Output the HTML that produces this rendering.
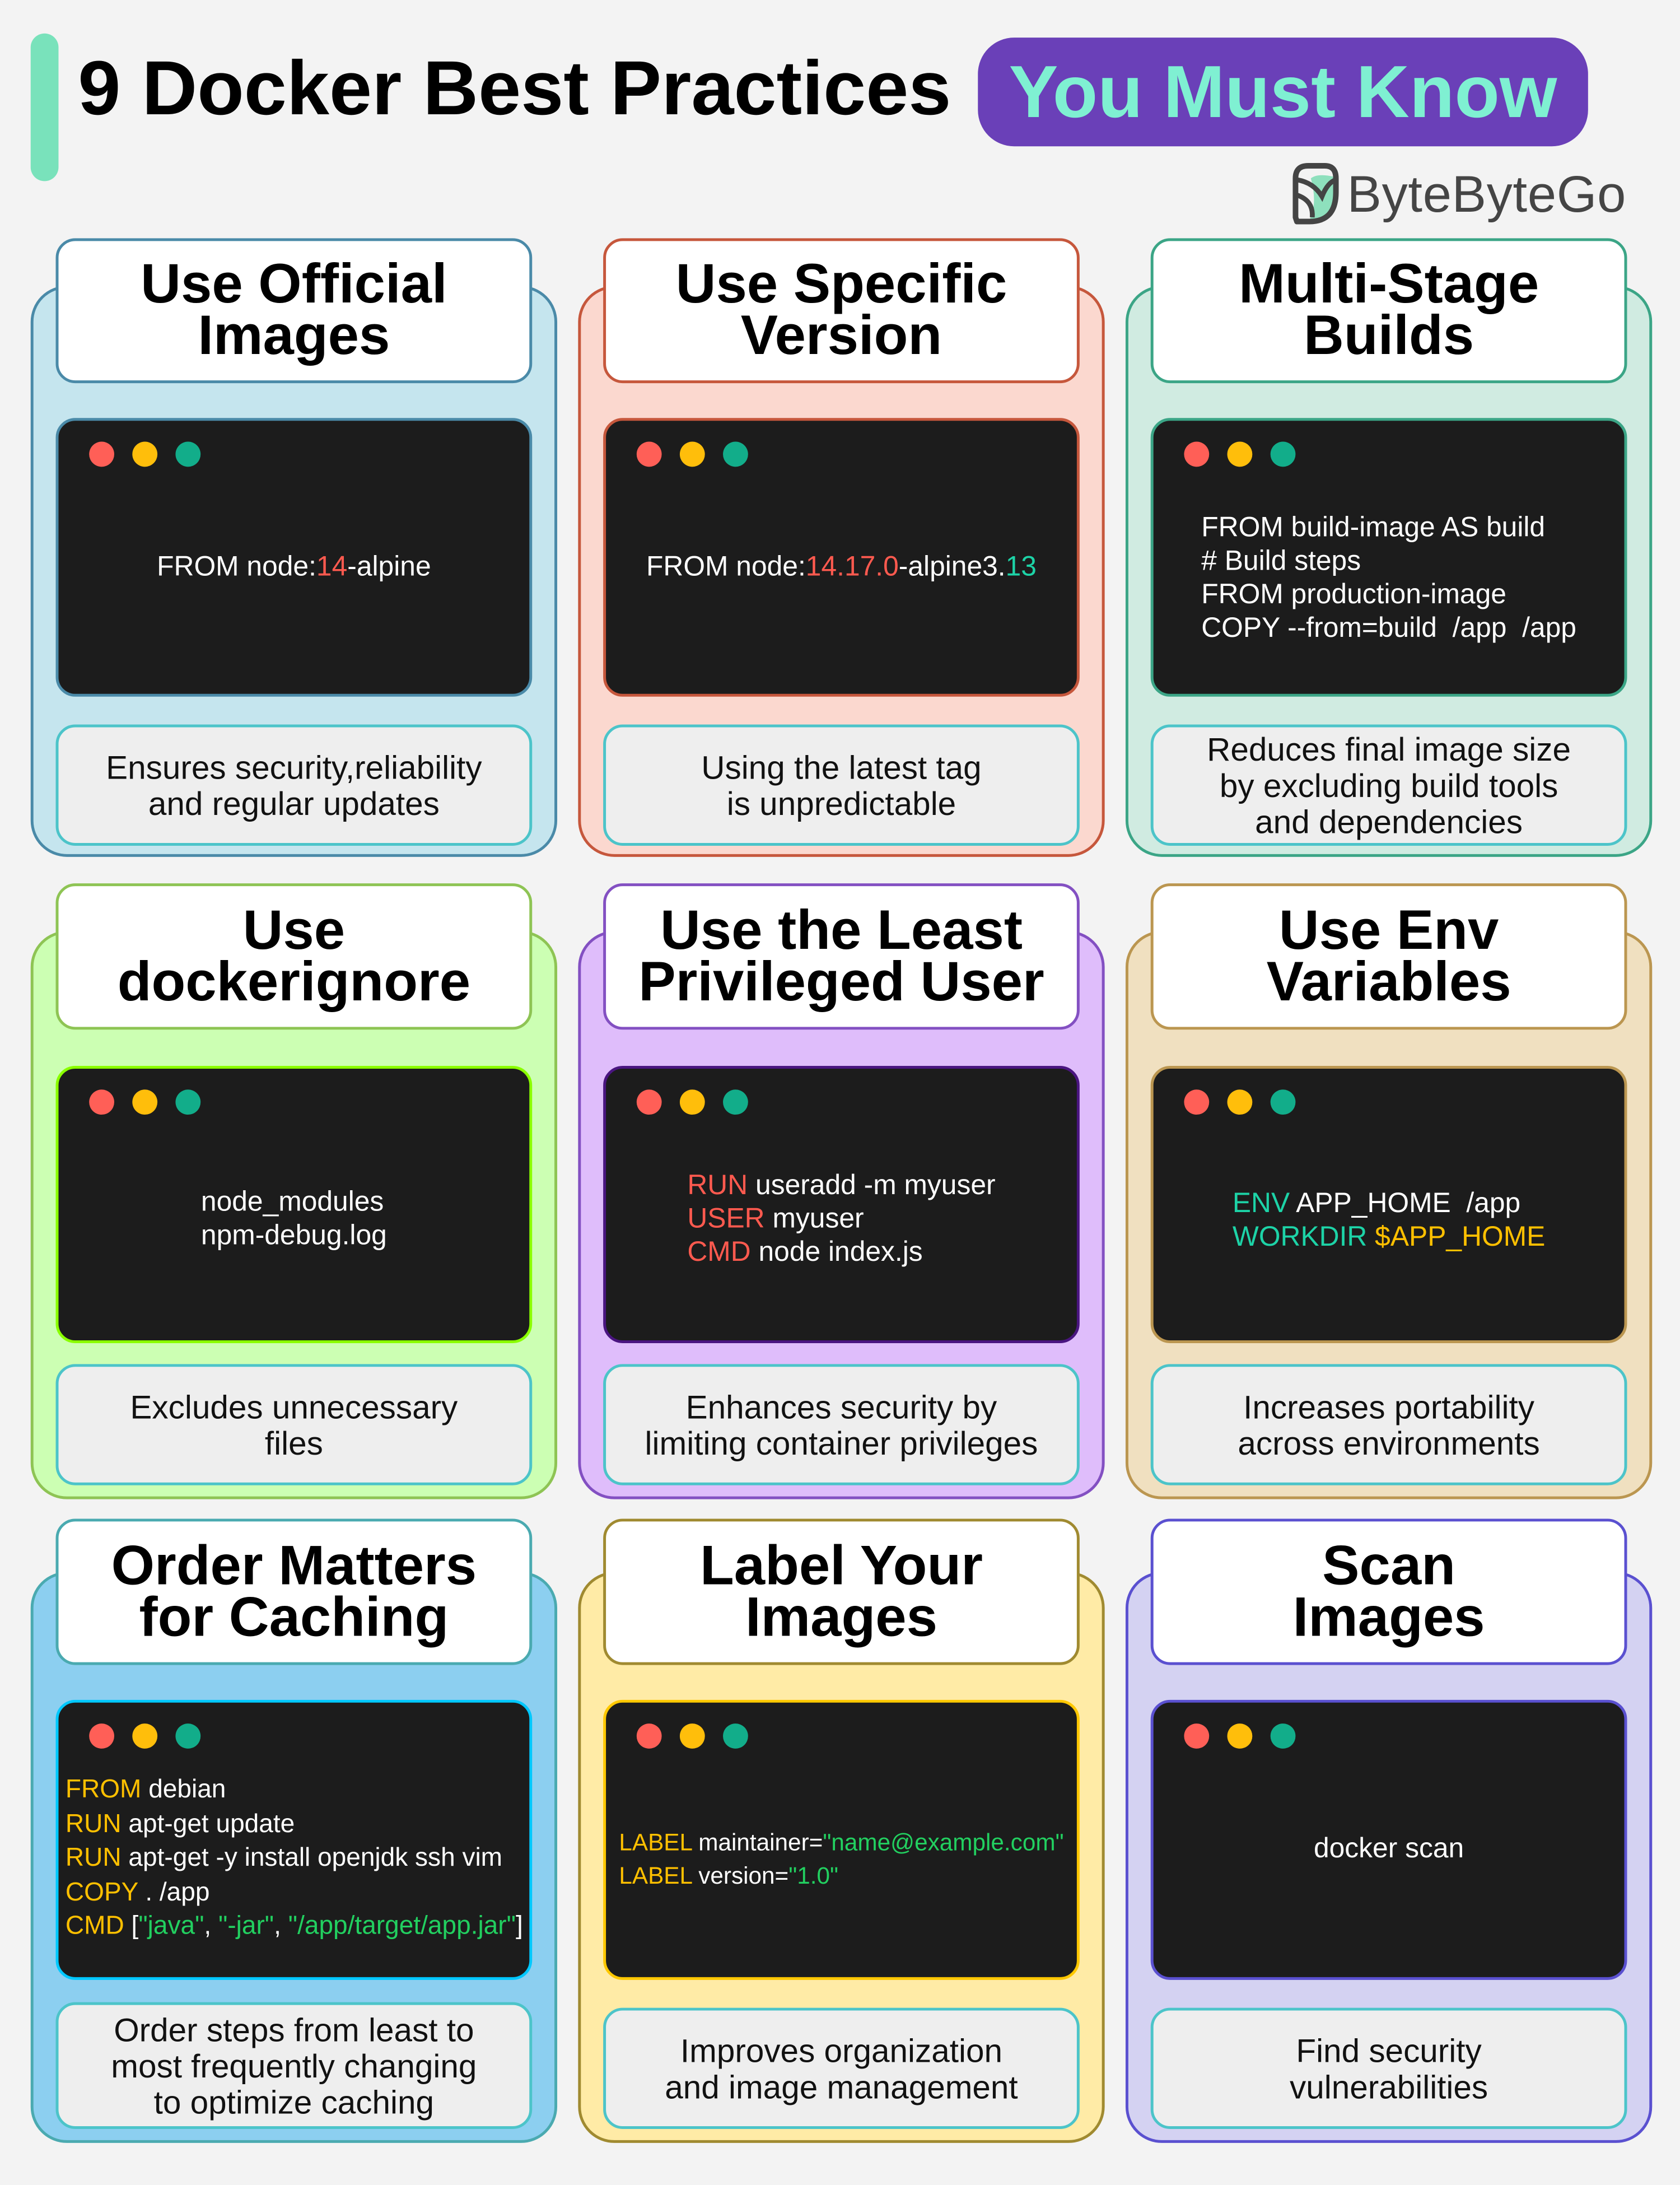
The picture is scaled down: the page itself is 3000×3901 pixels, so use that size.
<!DOCTYPE html>
<html><head><meta charset="utf-8">
<style>
html,body{margin:0;padding:0;background:#f3f3f3;width:3000px;height:3900px;overflow:hidden}
#w{position:absolute;left:0;top:0;width:1206px;height:1568px;transform:scale(2.48756);transform-origin:0 0;font-family:"Liberation Sans",Arial,sans-serif;background:#f3f3f3}
.abs{position:absolute;box-sizing:border-box}
.outer{border:2px solid;border-radius:26px;width:378px}
.hdr{background:#fff;border:2px solid;border-radius:14px;width:342px;display:flex;align-items:center;justify-content:center;text-align:center;font-weight:bold;font-size:40px;line-height:37px;color:#000}
.term{background:#1c1c1c;border:2px solid;border-radius:14px;width:342px;display:flex;align-items:center;justify-content:center;color:#fff;font-size:20px;line-height:24px}
.term .c{text-align:left;white-space:pre}
.dot{position:absolute;top:15px;width:18px;height:18px;border-radius:50%}
.desc{background:#eeeeee;border:2px solid #4cc4c9;border-radius:14px;width:342px;display:flex;align-items:center;justify-content:center;text-align:center;font-size:23.5px;line-height:26px;color:#111}
.r{color:#ff5a4f}.t{color:#1dd3a7}.y{color:#ffc000}.g{color:#22d060}
</style></head><body><div id="w">
<div class="abs" style="left:22px;top:24px;width:20px;height:106px;border-radius:10px;background:#79e2bb"></div>
<div class="abs" style="left:56px;top:30px;font-size:55px;font-weight:bold;line-height:66px;color:#000;white-space:nowrap">9 Docker Best Practices</div>
<div class="abs" style="left:702px;top:27px;width:438px;height:78px;border-radius:26px;background:#6a40b8;color:#7ff0d2;font-size:53px;font-weight:bold;display:flex;align-items:center;justify-content:center;white-space:nowrap">You Must Know</div>
<svg class="abs" style="left:926px;top:116px" width="38" height="46" viewBox="0 0 38 46">
<path d="M15 12 Q20 8 32 11 L32 26 Q30 42 14 42 Q20 30 15 12Z" fill="#8ee0bd"/>
<path d="M4 40 L4 12 Q4 3 13 3 L25 3 Q33 3 33 12 L33 22 Q33 43 14 43 L5 43Z" fill="none" stroke="#444" stroke-width="4" stroke-linejoin="round"/>
<path d="M5 13 Q17 15 23 25 Q27 15 33 13" fill="none" stroke="#444" stroke-width="3.5"/>
<path d="M5 24 Q17 28 16 40" fill="none" stroke="#444" stroke-width="3.5"/>
</svg>
<div class="abs" style="left:967px;top:115px;font-size:37px;color:#454545;line-height:50px;white-space:nowrap;letter-spacing:0.3px">ByteByteGo</div>

<!-- Row 1 -->
<div class="abs outer" style="left:22px;top:205px;height:410px;background:#c5e5ee;border-color:#4a8aa8"></div>
<div class="abs hdr" style="left:40px;top:171px;height:104px;border-color:#4a8aa8">Use Official<br>Images</div>
<div class="abs term" style="left:40px;top:300px;height:200px;border-color:#4a8aa8"><span class="dot" style="left:22px;background:#ff5f57"></span><span class="dot" style="left:53px;background:#ffbe0b"></span><span class="dot" style="left:84px;background:#12ad8a"></span><div class="c" style="margin-top:14px">FROM node:<span class="r">14</span>-alpine</div></div>
<div class="abs desc" style="left:40px;top:520px;height:87px">Ensures security,reliability<br>and regular updates</div>

<div class="abs outer" style="left:415px;top:205px;height:410px;background:#fbd8cf;border-color:#c6573c"></div>
<div class="abs hdr" style="left:433px;top:171px;height:104px;border-color:#c6573c">Use Specific<br>Version</div>
<div class="abs term" style="left:433px;top:300px;height:200px;border-color:#c6573c"><span class="dot" style="left:22px;background:#ff5f57"></span><span class="dot" style="left:53px;background:#ffbe0b"></span><span class="dot" style="left:84px;background:#12ad8a"></span><div class="c" style="margin-top:14px">FROM node:<span class="r">14.17.0</span>-alpine3.<span class="t">13</span></div></div>
<div class="abs desc" style="left:433px;top:520px;height:87px">Using the latest tag<br>is unpredictable</div>

<div class="abs outer" style="left:808px;top:205px;height:410px;background:#d0ebe1;border-color:#3ba586"></div>
<div class="abs hdr" style="left:826px;top:171px;height:104px;border-color:#3ba586">Multi-Stage<br>Builds</div>
<div class="abs term" style="left:826px;top:300px;height:200px;border-color:#3ba586"><span class="dot" style="left:22px;background:#ff5f57"></span><span class="dot" style="left:53px;background:#ffbe0b"></span><span class="dot" style="left:84px;background:#12ad8a"></span><div class="c" style="margin-top:30px">FROM build-image AS build
# Build steps
FROM production-image
COPY --from=build  /app  /app</div></div>
<div class="abs desc" style="left:826px;top:520px;height:87px">Reduces final image size<br>by excluding build tools<br>and dependencies</div>

<!-- Row 2 -->
<div class="abs outer" style="left:22px;top:668px;height:408px;background:#ccffb3;border-color:#8ec454"></div>
<div class="abs hdr" style="left:40px;top:634px;height:105px;border-color:#8ec454">Use<br>dockerignore</div>
<div class="abs term" style="left:40px;top:765px;height:199px;border-color:#8aff00"><span class="dot" style="left:22px;background:#ff5f57"></span><span class="dot" style="left:53px;background:#ffbe0b"></span><span class="dot" style="left:84px;background:#12ad8a"></span><div class="c" style="margin-top:20px">node_modules
npm-debug.log</div></div>
<div class="abs desc" style="left:40px;top:979px;height:87px">Excludes unnecessary<br>files</div>

<div class="abs outer" style="left:415px;top:668px;height:408px;background:#dfbdfb;border-color:#8350c2"></div>
<div class="abs hdr" style="left:433px;top:634px;height:105px;border-color:#8350c2">Use the Least<br>Privileged User</div>
<div class="abs term" style="left:433px;top:765px;height:199px;border-color:#4a1580"><span class="dot" style="left:22px;background:#ff5f57"></span><span class="dot" style="left:53px;background:#ffbe0b"></span><span class="dot" style="left:84px;background:#12ad8a"></span><div class="c" style="margin-top:20px"><span class="r">RUN</span> useradd -m myuser
<span class="r">USER</span> myuser
<span class="r">CMD</span> node index.js</div></div>
<div class="abs desc" style="left:433px;top:979px;height:87px">Enhances security by<br>limiting container privileges</div>

<div class="abs outer" style="left:808px;top:668px;height:408px;background:#f0e0c0;border-color:#bb9650"></div>
<div class="abs hdr" style="left:826px;top:634px;height:105px;border-color:#bb9650">Use Env<br>Variables</div>
<div class="abs term" style="left:826px;top:765px;height:199px;border-color:#bb9650"><span class="dot" style="left:22px;background:#ff5f57"></span><span class="dot" style="left:53px;background:#ffbe0b"></span><span class="dot" style="left:84px;background:#12ad8a"></span><div class="c" style="margin-top:22px"><span class="t">ENV</span> APP_HOME  /app
<span class="t">WORKDIR</span> <span class="y">$APP_HOME</span></div></div>
<div class="abs desc" style="left:826px;top:979px;height:87px">Increases portability<br>across environments</div>

<!-- Row 3 -->
<div class="abs outer" style="left:22px;top:1128px;height:410px;background:#8ccff0;border-color:#4aaab0"></div>
<div class="abs hdr" style="left:40px;top:1090px;height:105px;border-color:#4aaab0">Order Matters<br>for Caching</div>
<div class="abs term" style="left:40px;top:1220px;height:201px;border-color:#00c8ff;justify-content:flex-start"><span class="dot" style="left:22px;background:#ff5f57"></span><span class="dot" style="left:53px;background:#ffbe0b"></span><span class="dot" style="left:84px;background:#12ad8a"></span><div class="c" style="margin-top:26px;margin-left:5px;font-size:18.5px;line-height:24.5px"><span class="y">FROM</span> debian
<span class="y">RUN</span> apt-get update
<span class="y">RUN</span> apt-get -y install openjdk ssh vim
<span class="y">COPY</span> . /app
<span class="y">CMD</span> [<span class="g">"java"</span>, <span class="g">"-jar"</span>, <span class="g">"/app/target/app.jar"</span>]</div></div>
<div class="abs desc" style="left:40px;top:1437px;height:91px">Order steps from least to<br>most frequently changing<br>to optimize caching</div>

<div class="abs outer" style="left:415px;top:1128px;height:410px;background:#ffeba6;border-color:#a08a30"></div>
<div class="abs hdr" style="left:433px;top:1090px;height:105px;border-color:#a08a30">Label Your<br>Images</div>
<div class="abs term" style="left:433px;top:1220px;height:201px;border-color:#ffc800"><span class="dot" style="left:22px;background:#ff5f57"></span><span class="dot" style="left:53px;background:#ffbe0b"></span><span class="dot" style="left:84px;background:#12ad8a"></span><div class="c" style="margin-top:28px;font-size:17px"><span class="y">LABEL</span> maintainer=<span class="g">"name@example.com"</span>
<span class="y">LABEL</span> version=<span class="g">"1.0"</span></div></div>
<div class="abs desc" style="left:433px;top:1441px;height:87px">Improves organization<br>and image management</div>

<div class="abs outer" style="left:808px;top:1128px;height:410px;background:#d4d2f2;border-color:#5a50d0"></div>
<div class="abs hdr" style="left:826px;top:1090px;height:105px;border-color:#5a50d0">Scan<br>Images</div>
<div class="abs term" style="left:826px;top:1220px;height:201px;border-color:#5a50d0"><span class="dot" style="left:22px;background:#ff5f57"></span><span class="dot" style="left:53px;background:#ffbe0b"></span><span class="dot" style="left:84px;background:#12ad8a"></span><div class="c" style="margin-top:12px">docker scan</div></div>
<div class="abs desc" style="left:826px;top:1441px;height:87px">Find security<br>vulnerabilities</div>
</div></body></html>
